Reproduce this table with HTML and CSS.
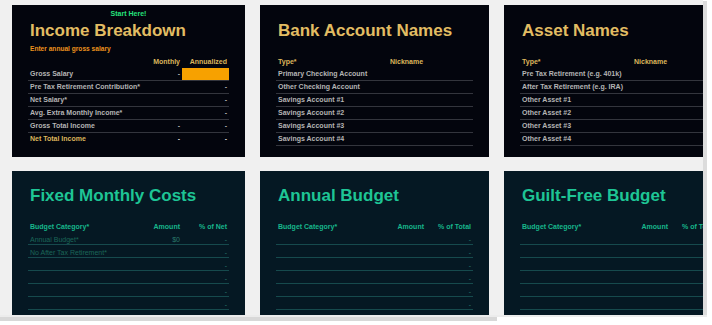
FILE: index.html
```html
<!DOCTYPE html>
<html lang="en">
<head>
<meta charset="utf-8">
<title>Budget Dashboard</title>
<link rel="stylesheet" href="styles.css">
</head>
<body>
<div class="viewport">
  <div class="board">
    <!-- Income Breakdown -->
    <section class="card card-dark">
      <div class="kicker">Start Here!</div>
      <h2 class="title">Income Breakdown</h2>
      <div class="sub">Enter annual gross salary</div>
      <div class="tbl tbl-income">
        <div class="thead"><span></span><span class="num">Monthly</span><span class="num">Annualized</span></div>
        <div class="row"><span>Gross Salary</span><span class="num">-</span><span class="input-cell"></span></div>
        <div class="row"><span>Pre Tax Retirement Contribution*</span><span class="num"></span><span class="num">-</span></div>
        <div class="row"><span>Net Salary*</span><span class="num"></span><span class="num">-</span></div>
        <div class="row"><span>Avg. Extra Monthly Income*</span><span class="num"></span><span class="num">-</span></div>
        <div class="row"><span>Gross Total Income</span><span class="num">-</span><span class="num">-</span></div>
        <div class="row row-total no-line"><span>Net Total Income</span><span class="num">-</span><span class="num">-</span></div>
      </div>
    </section>

    <!-- Bank Account Names -->
    <section class="card card-dark">
      <div class="kicker"></div>
      <h2 class="title">Bank Account Names</h2>
      <div class="sub"></div>
      <div class="tbl tbl-names">
        <div class="thead"><span>Type*</span><span>Nickname</span></div>
        <div class="row"><span>Primary Checking Account</span><span></span></div>
        <div class="row"><span>Other Checking Account</span><span></span></div>
        <div class="row"><span>Savings Account #1</span><span></span></div>
        <div class="row"><span>Savings Account #2</span><span></span></div>
        <div class="row"><span>Savings Account #3</span><span></span></div>
        <div class="row"><span>Savings Account #4</span><span></span></div>
      </div>
    </section>

    <!-- Asset Names -->
    <section class="card card-dark">
      <div class="kicker"></div>
      <h2 class="title">Asset Names</h2>
      <div class="sub"></div>
      <div class="tbl tbl-names">
        <div class="thead"><span>Type*</span><span>Nickname</span></div>
        <div class="row"><span>Pre Tax Retirement (e.g. 401k)</span><span></span></div>
        <div class="row"><span>After Tax Retirement (e.g. IRA)</span><span></span></div>
        <div class="row"><span>Other Asset #1</span><span></span></div>
        <div class="row"><span>Other Asset #2</span><span></span></div>
        <div class="row"><span>Other Asset #3</span><span></span></div>
        <div class="row"><span>Other Asset #4</span><span></span></div>
      </div>
    </section>

    <!-- Fixed Monthly Costs -->
    <section class="card card-teal">
      <div class="kicker"></div>
      <h2 class="title">Fixed Monthly Costs</h2>
      <div class="sub"></div>
      <div class="tbl tbl-budget">
        <div class="thead"><span>Budget Category*</span><span class="num">Amount</span><span class="num">% of Net</span></div>
        <div class="row"><span>Annual Budget*</span><span class="num">$0</span><span class="num">-</span></div>
        <div class="row"><span>No After Tax Retirement*</span><span class="num"></span><span class="num">-</span></div>
        <div class="row"><span></span><span class="num"></span><span class="num">-</span></div>
        <div class="row"><span></span><span class="num"></span><span class="num">-</span></div>
        <div class="row"><span></span><span class="num"></span><span class="num">-</span></div>
        <div class="row"><span></span><span class="num"></span><span class="num">-</span></div>
        <div class="row"><span></span><span class="num"></span><span class="num">-</span></div>
      </div>
    </section>

    <!-- Annual Budget -->
    <section class="card card-teal">
      <div class="kicker"></div>
      <h2 class="title">Annual Budget</h2>
      <div class="sub"></div>
      <div class="tbl tbl-budget">
        <div class="thead"><span>Budget Category*</span><span class="num">Amount</span><span class="num">% of Total</span></div>
        <div class="row"><span></span><span class="num"></span><span class="num">-</span></div>
        <div class="row"><span></span><span class="num"></span><span class="num">-</span></div>
        <div class="row"><span></span><span class="num"></span><span class="num">-</span></div>
        <div class="row"><span></span><span class="num"></span><span class="num">-</span></div>
        <div class="row"><span></span><span class="num"></span><span class="num">-</span></div>
        <div class="row"><span></span><span class="num"></span><span class="num">-</span></div>
        <div class="row"><span></span><span class="num"></span><span class="num">-</span></div>
      </div>
    </section>

    <!-- Guilt-Free Budget -->
    <section class="card card-teal">
      <div class="kicker"></div>
      <h2 class="title">Guilt-Free Budget</h2>
      <div class="sub"></div>
      <div class="tbl tbl-budget">
        <div class="thead"><span>Budget Category*</span><span class="num">Amount</span><span class="num">% of Total</span></div>
        <div class="row"><span></span><span class="num"></span><span class="num">-</span></div>
        <div class="row"><span></span><span class="num"></span><span class="num">-</span></div>
        <div class="row"><span></span><span class="num"></span><span class="num">-</span></div>
        <div class="row"><span></span><span class="num"></span><span class="num">-</span></div>
        <div class="row"><span></span><span class="num"></span><span class="num">-</span></div>
        <div class="row"><span></span><span class="num"></span><span class="num">-</span></div>
        <div class="row"><span></span><span class="num"></span><span class="num">-</span></div>
      </div>
    </section>
  </div>

  <div class="vscroll"><div class="vthumb"></div></div>
  <div class="hscroll"><div class="hthumb"></div></div>
</div>
</body>
</html>
```

FILE: styles.css
```css
* { box-sizing: border-box; }

html, body {
  margin: 0;
  padding: 0;
  overflow: hidden;
  background: #f0f0f0;
}

body {
  font-family: "Liberation Sans", Arial, sans-serif;
}

.viewport {
  position: relative;
  width: 712px;
  height: 325px;
  overflow: hidden;
  background: #f0f0f0;
}

.board {
  display: grid;
  grid-template-columns: 233px 229px 229px;
  grid-template-rows: 152px 170px;
  column-gap: 15px;
  row-gap: 14px;
  padding: 5px 0 0 12px;
  width: max-content;
}

.card {
  display: flex;
  flex-direction: column;
  padding: 5px 16px 0;
  overflow: hidden;
}

.card-dark { background: #03050d; }
.card-teal { background: #051823; padding-top: 4px; }

.kicker {
  height: 8px;
  line-height: 8px;
  font-size: 7px;
  font-weight: bold;
  text-align: center;
  color: #25e27c;
  margin-bottom: 3px;
}

.title {
  margin: 0;
  height: 20px;
  line-height: 20px;
  font-size: 17px;
  font-weight: bold;
  padding-left: 2px;
  white-space: nowrap;
}

.card-dark .title { color: #e2bd63; }
.card-teal .title { color: #1ec595; }

.sub {
  margin-top: 4px;
  height: 8px;
  line-height: 8px;
  font-size: 6.6px;
  font-weight: bold;
  color: #ec921d;
  padding-left: 2px;
}

.tbl {
  margin-top: 3px;
  font-size: 7px;
  white-space: nowrap;
}

.thead, .row {
  display: grid;
}

.tbl-income .thead, .tbl-income .row,
.tbl-budget .thead, .tbl-budget .row {
  grid-template-columns: 1fr 40px 47px;
}

.tbl-names .thead, .tbl-names .row {
  grid-template-columns: 112px 1fr;
}

.thead span, .row span {
  padding: 0 2px;
  overflow: hidden;
}

.num { text-align: right; }

.thead {
  height: 12px;
  line-height: 12px;
  font-weight: bold;
}

.card-dark .thead { color: #dcb65c; }

.card-dark .row {
  height: 13px;
  line-height: 12px;
  font-weight: bold;
  color: #b4b4b4;
  border-bottom: 1px solid #33353d;
}

.card-dark .row.no-line { border-bottom: none; }

.row-total span:first-child { color: #dcb65c; }
.row-total .num { color: #d6d6d6; }

.input-cell {
  background: #f7a100;
}

.card-teal .thead {
  height: 11px;
  line-height: 11px;
  color: #17b68b;
}

.card-teal .row {
  height: 13px;
  line-height: 15px;
  color: #1b6658;
  border-bottom: 1px solid #164a4d;
}

.card-teal .row .num { color: #2a7a6c; }

/* scrollbars drawn over the viewport edges */
.vscroll {
  position: absolute;
  top: 0;
  right: 0;
  bottom: 0;
  width: 9px;
  background: #ffffff;
}

.vthumb {
  width: 4px;
  height: 318px;
  margin-top: 1px;
  background: #dcdcdc;
}

.hscroll {
  position: absolute;
  left: 0;
  right: 5px;
  bottom: 0;
  height: 10px;
  background: #ffffff;
  border-top: 2px solid #ececec;
}

.hthumb {
  width: 497px;
  height: 4px;
  background: #d8d8d8;
}
```
